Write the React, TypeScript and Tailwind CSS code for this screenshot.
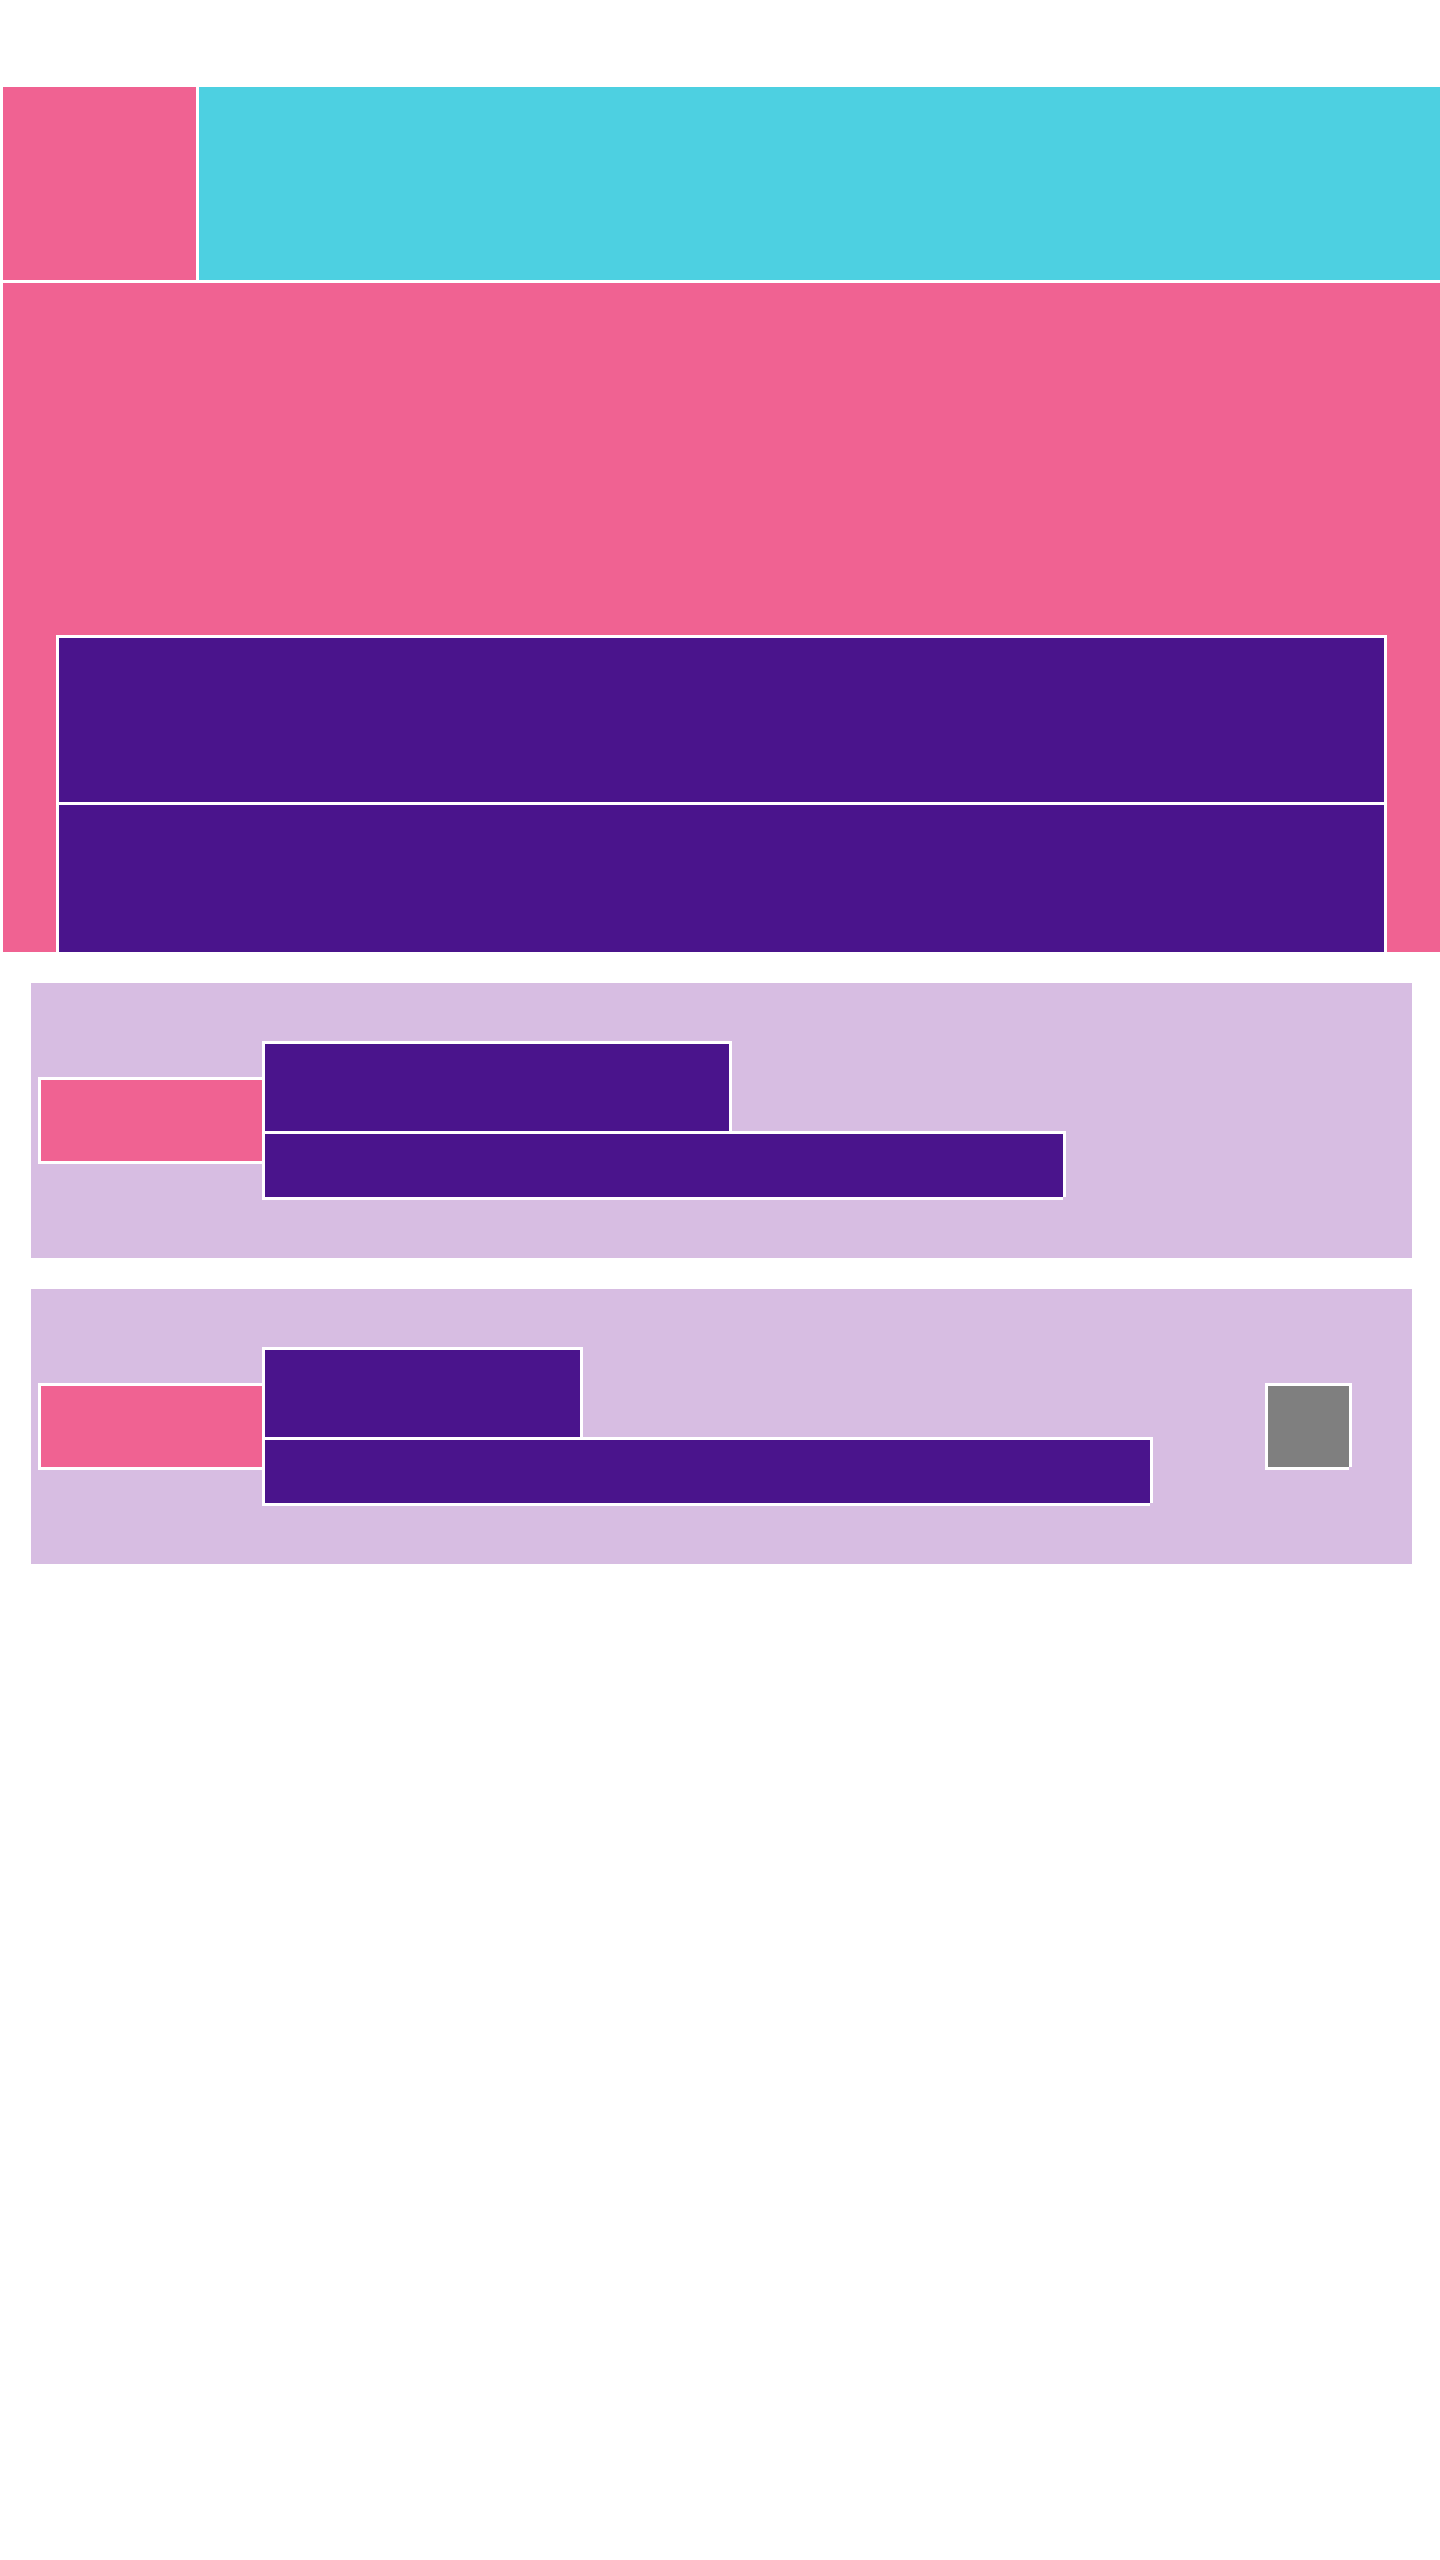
const frame =
  "shadow-[-3px_-3px_0_0_#ffffff,3px_-3px_0_0_#ffffff,3px_0_0_0_#ffffff,-3px_3px_0_0_#ffffff,0_3px_0_0_#ffffff]";

function Card({
  topWidth,
  bottomWidth,
  withThumb,
}: {
  topWidth: string;
  bottomWidth: string;
  withThumb?: boolean;
}) {
  return (
    <div className="ml-[31px] mt-[31px] flex h-[275px] w-[1381px] items-center bg-[#d7bde2]">
      {/* avatar placeholder */}
      <div className={`ml-[10px] h-[81px] w-[221px] shrink-0 bg-[#f06292] ${frame}`} />
      {/* title + subtitle */}
      <div className="ml-[3px] flex flex-col gap-[3px]">
        <div className={`h-[87px] bg-[#4a148c] ${topWidth} ${frame}`} />
        <div className={`h-[63px] bg-[#4a148c] ${bottomWidth} ${frame}`} />
      </div>
      {withThumb && (
        <div className={`ml-auto mr-[63px] h-[81px] w-[81px] shrink-0 bg-[#7f7f7f] ${frame}`} />
      )}
    </div>
  );
}

export default function App() {
  return (
    <main className="min-h-[2560px] bg-white pt-[87px]">
      {/* Header */}
      <div className="flex h-[193px] gap-[3px] pl-[3px]">
        <div className="w-[193px] shrink-0 bg-[#f06292]" />
        <div className="flex-1 bg-[#4dd0e1]" />
      </div>

      {/* Hero */}
      <div className="ml-[3px] mt-[3px] h-[669px] overflow-hidden bg-[#f06292] px-[56px] pt-[355px]">
        <div className="flex flex-col gap-[3px]">
          <div className={`h-[164px] bg-[#4a148c] ${frame}`} />
          <div className={`h-[200px] bg-[#4a148c] ${frame}`} />
        </div>
      </div>

      {/* List */}
      <Card topWidth="w-[464px]" bottomWidth="w-[798px]" />
      <Card topWidth="w-[315px]" bottomWidth="w-[885px]" withThumb />
    </main>
  );
}
